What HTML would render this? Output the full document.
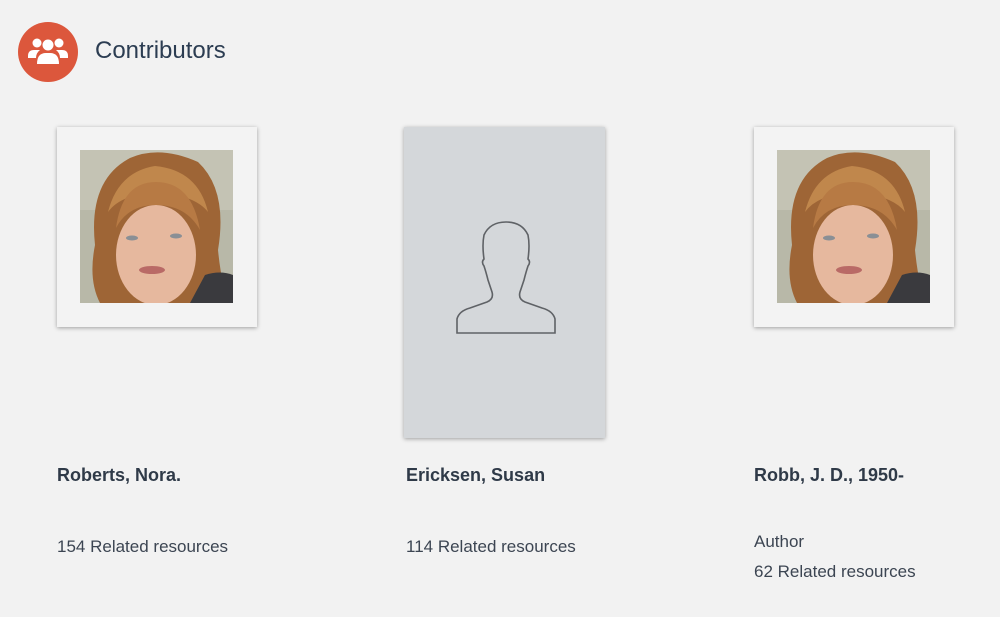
<!DOCTYPE html>
<html><head><meta charset="utf-8"><style>
html,body{margin:0;padding:0;background:#f2f2f2;width:1000px;height:617px;overflow:hidden;font-family:"Liberation Sans",Arial,sans-serif;}
.abs{position:absolute}
.hdr{left:18px;top:22px;width:60px;height:60px;border-radius:50%;background:#dc573c}
.title{left:95px;top:37px;font-size:24px;color:#2c3d52}
.card{background:#f3f3f3;box-shadow:0 1px 4px rgba(0,0,0,.35)}
.name{font-size:18px;font-weight:bold;color:#2f3a48}
.rel{font-size:17px;color:#3c4552}
</style></head><body>
<div class="abs hdr">
<svg width="60" height="60" viewBox="0 0 60 60">
<g fill="#fff">
<circle cx="19" cy="21" r="4.5"/><circle cx="41" cy="21" r="4.5"/><circle cx="30" cy="23" r="5.5"/>
<path d="M10 34 q0-6 6-6 h6 q-4 3 -4 8 h-8z"/>
<path d="M50 34 q0-6 -6-6 h-6 q4 3 4 8 h8z"/>
<path d="M19 42 q0-11 9-11 h4 q9 0 9 11z"/>
</g></svg></div>
<div class="abs title">Contributors</div>

<svg width="0" height="0" style="position:absolute"><defs>
<g id="ph">
<rect width="153" height="153" fill="#b8b8a8"/>
<rect x="0" y="0" width="153" height="60" fill="#c4c3b4"/>
<path d="M15 95 Q8 30 50 8 Q80 -5 118 12 Q148 40 138 100 Q142 140 150 150 L153 153 H20 Q8 130 15 95z" fill="#9e6536"/>
<path d="M28 62 Q38 22 75 16 Q118 20 128 62 Q115 45 75 42 Q40 45 28 62z" fill="#c0874c"/>
<ellipse cx="76" cy="105" rx="40" ry="50" fill="#e6b89e"/>
<path d="M36 78 Q42 32 76 32 Q112 32 120 80 Q106 55 76 55 Q48 55 36 78z" fill="#b77a44"/>
<path d="M110 153 L125 125 Q140 120 153 125 V153z" fill="#3a3a3e"/>
<ellipse cx="72" cy="120" rx="13" ry="4" fill="#b96a66"/>
<ellipse cx="52" cy="88" rx="6" ry="2.5" fill="#8a8f95"/>
<ellipse cx="96" cy="86" rx="6" ry="2.5" fill="#8a8f95"/>
</g></defs></svg>

<div class="abs card" style="left:57px;top:127px;width:200px;height:200px">
<svg class="abs" style="left:23px;top:23px" width="153" height="153"><use href="#ph"/></svg></div>
<div class="abs card" style="left:404px;top:127px;width:201px;height:311px;background:#d4d7da">
<svg class="abs" style="left:0;top:0" width="201" height="311" viewBox="404 127 201 311">
<path d="M457 333 V319 Q459 311 470 308 L487 302 Q494 299 492 292 L488 280 Q486 272 484 266 Q481 262 484 259 Q482 245 484 235 Q490 222 506 222 Q522 222 528 235 Q530 245 528 259 Q531 262 528 266 Q526 272 524 280 L520 292 Q518 299 525 302 L542 308 Q553 311 555 319 V333 Z" fill="none" stroke="#5f6266" stroke-width="1.6"/>
</svg></div>
<div class="abs card" style="left:754px;top:127px;width:200px;height:200px">
<svg class="abs" style="left:23px;top:23px" width="153" height="153"><use href="#ph"/></svg></div>

<div class="abs name" style="left:57px;top:465px">Roberts, Nora.</div>
<div class="abs name" style="left:406px;top:465px">Ericksen, Susan</div>
<div class="abs name" style="left:754px;top:465px">Robb, J. D., 1950-</div>
<div class="abs rel" style="left:57px;top:537px">154 Related resources</div>
<div class="abs rel" style="left:406px;top:537px">114 Related resources</div>
<div class="abs rel" style="left:754px;top:532px">Author</div>
<div class="abs rel" style="left:754px;top:562px">62 Related resources</div>
</body></html>
